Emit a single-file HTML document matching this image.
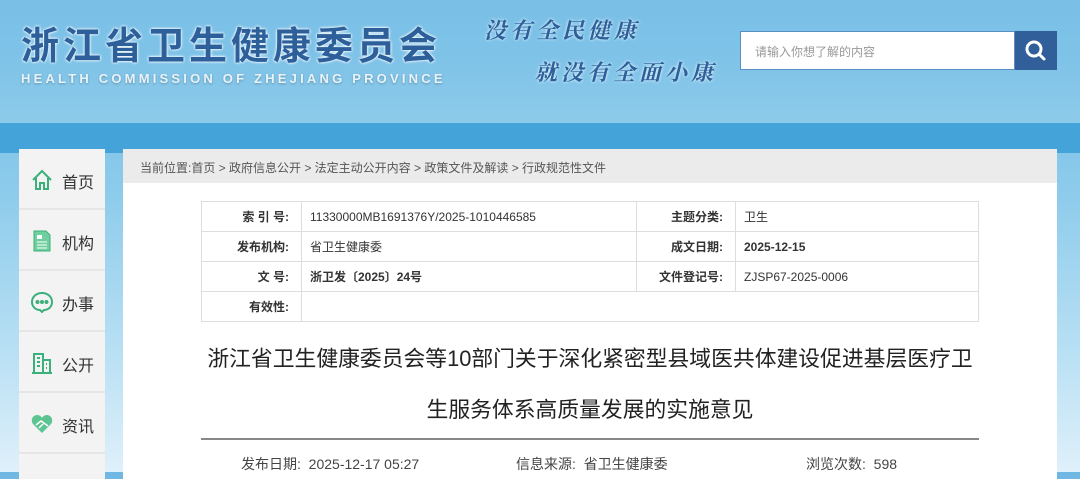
<!DOCTYPE html>
<html><head><meta charset="utf-8"><style>
*{margin:0;padding:0;box-sizing:border-box}
body{width:1080px;height:472px;overflow:hidden;position:relative;font-family:"Liberation Sans","Noto Sans CJK SC",sans-serif;background:linear-gradient(180deg,#6fb8e3 0%,#8ccbeb 40%,#b9e0f4 75%,#dff0fa 100%)}
.hdr{position:absolute;left:0;top:0;width:1080px;height:123px;background:linear-gradient(180deg,#79bfe6 0%,#7fc3e8 50%,#8dcbea 100%)}
.band{position:absolute;left:0;top:123px;width:1080px;height:30px;background:#44a3d9}
.logo{position:absolute;left:21px;top:15px;font-size:38px;font-weight:bold;color:#2d5f9a;letter-spacing:4px;font-family:"Noto Sans CJK SC",sans-serif;text-shadow:0 0 3px #fff,0 0 2px #fff}
.en{position:absolute;left:21px;top:71px;font-size:13px;color:#e8f2f8;letter-spacing:3.2px;font-weight:bold;text-shadow:0 1px 2px rgba(0,0,0,.25)}
.slogan{position:absolute;font-family:"Noto Serif CJK SC",serif;font-size:22px;font-weight:bold;font-style:italic;color:#2d5f9a;letter-spacing:4px;text-shadow:0 0 3px #fff}
.search{position:absolute;left:740px;top:31px;width:275px;height:39px;background:#fff;border:1px solid #5a8fc4}
.search span{position:absolute;left:14px;top:11px;font-size:12px;color:#999}
.sbtn{position:absolute;left:1015px;top:31px;width:42px;height:39px;background:#305f99}
.side{position:absolute;left:19px;top:149px;width:86px;height:330px;background:#f3f3f3}
.item{height:61px;border-bottom:2px solid #e6e6e6;position:relative}
.item svg{position:absolute;left:12px;top:20px}
.item b{position:absolute;left:43px;top:20px;font-weight:normal;font-size:16px;color:#333}
.main{position:absolute;left:123px;top:149px;width:934px;height:330px;background:#fff}
.crumb{height:34px;background:#ebebeb;font-size:12px;color:#555;padding:10px 0 0 17px}
table{position:absolute;left:78px;top:52px;border-collapse:collapse;width:778px}
td{border:1px solid #ddd;height:30px;font-size:12px;color:#333;padding:0 8px}
td.l{text-align:right;font-weight:bold;padding-right:12px}
.t{position:absolute;left:0;width:934px;text-align:center;font-size:21.8px;color:#222}
.hr{position:absolute;left:78px;top:289px;width:778px;height:2px;background:#888}
.meta{position:absolute;top:305px;font-size:14px;color:#444}
</style></head><body>
<div class="hdr"></div>
<div class="band"></div>
<div class="logo">浙江省卫生健康委员会</div>
<div class="en">HEALTH COMMISSION OF ZHEJIANG PROVINCE</div>
<div class="slogan" style="left:484px;top:14px">没有全民健康</div>
<div class="slogan" style="left:535px;top:56px">就没有全面小康</div>
<div class="search"><span>请输入你想了解的内容</span></div>
<div class="sbtn"><svg width="42" height="39"><circle cx="19" cy="18" r="7" fill="none" stroke="#fff" stroke-width="3"/><line x1="24" y1="23" x2="29" y2="28" stroke="#fff" stroke-width="3" stroke-linecap="round"/></svg></div>
<div class="side">
<div class="item"><svg width="22" height="22" viewBox="0 0 22 22" fill="none" stroke="#3bb07a" stroke-width="2"><path d="M2 11 L11 2 L20 11 M5 9 V20 H9 V14 H13 V20 H17 V9"/></svg><b>首页</b></div>
<div class="item"><svg width="22" height="22" viewBox="0 0 22 22"><path d="M3 1 H15 L19 5 V21 H3 Z" fill="#6fcf9f" stroke="#3bb07a"/><rect x="6" y="5" width="5" height="4" fill="#fff"/><path d="M6 12 H16 M6 15 H16 M6 18 H16" stroke="#fff"/></svg><b>机构</b></div>
<div class="item"><svg width="22" height="22" viewBox="0 0 22 22" fill="none" stroke="#3bb07a" stroke-width="2"><path d="M11 2 C5 2 1 6 1 11 C1 16 5 19 9 19 L11 21 L13 19 C17 19 21 16 21 11 C21 6 17 2 11 2Z"/><circle cx="6.5" cy="11" r="1" fill="#3bb07a"/><circle cx="11" cy="11" r="1" fill="#3bb07a"/><circle cx="15.5" cy="11" r="1" fill="#3bb07a"/></svg><b>办事</b></div>
<div class="item"><svg width="22" height="22" viewBox="0 0 22 22" fill="none" stroke="#3bb07a" stroke-width="2"><path d="M3 21 V2 H12 V21 M12 8 H19 V21 M1 21 H21 M6 6 H9 M6 10 H9 M6 14 H9 M15 12 H16 M15 16 H16"/></svg><b>公开</b></div>
<div class="item"><svg width="22" height="22" viewBox="0 0 22 22"><path d="M11 20 L2 11 C-1 7 2 2 6 2 C8 2 10 3 11 5 C12 3 14 2 16 2 C20 2 23 7 20 11 Z" fill="#5cc490"/><path d="M5 12 L10 8 L17 13 M8 15 L12 11" stroke="#fff" stroke-width="1.5" fill="none"/></svg><b>资讯</b></div>
</div>
<div class="main">
<div class="crumb">当前位置:首页 &gt; 政府信息公开 &gt; 法定主动公开内容 &gt; 政策文件及解读 &gt; 行政规范性文件</div>
<table>
<tr><td class="l" style="width:100px">索 引 号:</td><td style="width:335px">11330000MB1691376Y/2025-1010446585</td><td class="l" style="width:99px">主题分类:</td><td>卫生</td></tr>
<tr><td class="l">发布机构:</td><td>省卫生健康委</td><td class="l">成文日期:</td><td style="font-weight:bold">2025-12-15</td></tr>
<tr><td class="l">文 号:</td><td style="font-weight:bold">浙卫发〔2025〕24号</td><td class="l">文件登记号:</td><td>ZJSP67-2025-0006</td></tr>
<tr><td class="l">有效性:</td><td colspan="3"></td></tr>
</table>
<div class="t" style="top:193px">浙江省卫生健康委员会等10部门关于深化紧密型县域医共体建设促进基层医疗卫</div>
<div class="t" style="top:244px">生服务体系高质量发展的实施意见</div>
<div class="hr"></div>
<div class="meta" style="left:118px">发布日期:&nbsp;&nbsp;2025-12-17 05:27</div>
<div class="meta" style="left:393px">信息来源:&nbsp;&nbsp;省卫生健康委</div>
<div class="meta" style="left:683px">浏览次数:&nbsp;&nbsp;598</div>
</div>
</body></html>
